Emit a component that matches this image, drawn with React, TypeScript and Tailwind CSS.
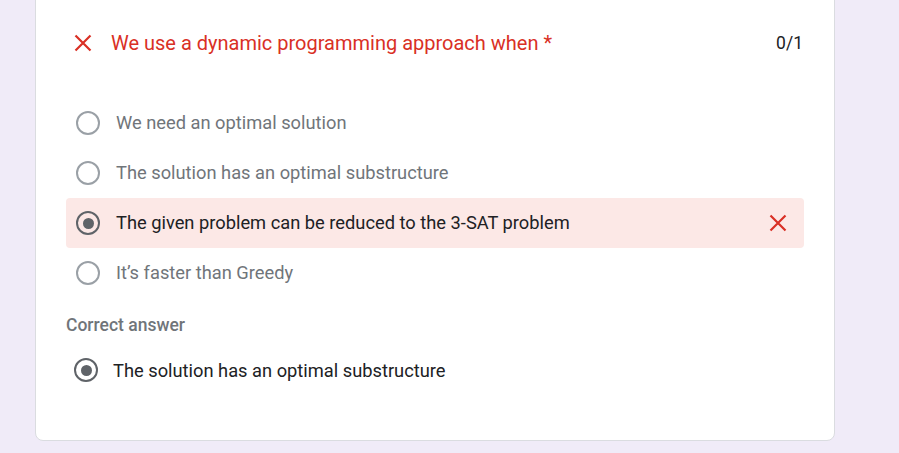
import React from 'react'

const font = { fontFamily: 'Roboto, "Liberation Sans", sans-serif' }

function XIcon({ className = '' }: { className?: string }) {
  return (
    <svg viewBox="0 0 24 24" className={className} fill="none">
      <path d="M4.5 4.5L19.5 19.5M19.5 4.5L4.5 19.5" stroke="#d93025" strokeWidth="2.2" />
    </svg>
  )
}

function Radio({ checked }: { checked?: boolean }) {
  return (
    <div
      className={`w-6 h-6 rounded-full border-2 flex items-center justify-center shrink-0 ${
        checked ? 'border-[#5f6368]' : 'border-[#9aa0a6]'
      }`}
    >
      {checked && <div className="w-[11px] h-[11px] rounded-full bg-[#5f6368]" />}
    </div>
  )
}

const options = [
  { text: 'We need an optimal solution' },
  { text: 'The solution has an optimal substructure' },
  { text: 'The given problem can be reduced to the 3-SAT problem', picked: true },
  { text: 'It’s faster than Greedy' },
]

export default function App() {
  return (
    <div className="min-h-screen bg-[#f0ebf8] overflow-hidden" style={font}>
      <div className="ml-[35px] w-[800px] -mt-[8px] h-[449px] bg-white border border-[#dadce0] rounded-lg px-[30px]">
        <div className="flex items-center h-[51px] mt-[24px]">
          <div className="w-6 h-6 ml-[5px] flex items-center justify-center">
            <XIcon className="w-6 h-6" />
          </div>
          <div className="ml-[16px] text-[20px] text-[#d93025] flex-1">
            We use a dynamic programming approach when *
          </div>
          <div className="text-[17.5px] text-[#202124] mr-[1px] mt-[2px]">0/1</div>
        </div>
        <div className="mt-[30px] flex flex-col">
          {options.map((o) => (
            <div
              key={o.text}
              className={`flex items-center h-[50px] pl-[10px] pr-[14px] rounded ${
                o.picked ? 'bg-[#fce8e6]' : ''
              }`}
            >
              <Radio checked={o.picked} />
              <div
                className={`ml-[16px] flex-1 text-[18.3px] ${
                  o.picked ? 'text-[#202124]' : 'text-[#70757a]'
                }`}
              >
                {o.text}
              </div>
              {o.picked && <XIcon className="w-6 h-6" />}
            </div>
          ))}
        </div>
        <div className="mt-[14px] text-[17.5px] font-medium text-[#70757a]">Correct answer</div>
        <div className="flex items-center h-[50px] pl-[8px] mt-[7px]">
          <Radio checked />
          <div className="ml-[15px] text-[18.3px] text-[#202124]">
            The solution has an optimal substructure
          </div>
        </div>
      </div>
    </div>
  )
}
